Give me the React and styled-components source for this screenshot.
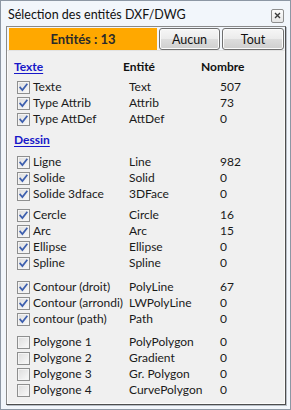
import React from "react";
import styled, { createGlobalStyle } from "styled-components";

const GlobalStyle = createGlobalStyle`
  html, body {
    margin: 0;
    padding: 0;
    background: #ffffff;
  }
  body {
    font-family: Lato, "Open Sans", "Liberation Sans", sans-serif;
    font-size: 12px;
    color: #1a1a1a;
  }
`;

const groups = [
  {
    title: "Texte",
    showColumns: true,
    blocks: [
      [
        { label: "Texte", entity: "Text", count: 507, checked: true },
        { label: "Type Attrib", entity: "Attrib", count: 73, checked: true },
        { label: "Type AttDef", entity: "AttDef", count: 0, checked: true },
      ],
    ],
  },
  {
    title: "Dessin",
    blocks: [
      [
        { label: "Ligne", entity: "Line", count: 982, checked: true },
        { label: "Solide", entity: "Solid", count: 0, checked: true },
        { label: "Solide 3dface", entity: "3DFace", count: 0, checked: true },
      ],
      [
        { label: "Cercle", entity: "Circle", count: 16, checked: true },
        { label: "Arc", entity: "Arc", count: 15, checked: true },
        { label: "Ellipse", entity: "Ellipse", count: 0, checked: true },
        { label: "Spline", entity: "Spline", count: 0, checked: true },
      ],
      [
        { label: "Contour (droit)", entity: "PolyLine", count: 67, checked: true },
        { label: "Contour (arrondi)", entity: "LWPolyLine", count: 0, checked: true },
        { label: "contour (path)", entity: "Path", count: 0, checked: true },
      ],
      [
        { label: "Polygone 1", entity: "PolyPolygon", count: 0 },
        { label: "Polygone 2", entity: "Gradient", count: 0 },
        { label: "Polygone 3", entity: "Gr. Polygon", count: 0 },
        { label: "Polygone 4", entity: "CurvePolygon", count: 0 },
      ],
    ],
  },
];

const blockGaps = [
  [4],
  [6, 5, 8, 7],
];

const App = () => {
  return (
    <>
      <GlobalStyle />
      <Window>
        <TitleBar>
          <Title>Sélection des entités DXF/DWG</Title>
          <CloseButton aria-label="Fermer">
            <svg width="7" height="7" viewBox="0 0 7 7">
              <path
                d="M1 1 L6 6 M6 1 L1 6"
                stroke="#3c3c3c"
                strokeWidth="1.4"
                fill="none"
              />
            </svg>
          </CloseButton>
        </TitleBar>
        <Frame>
          <Toolbar>
            <CountBadge>Entités : 13</CountBadge>
            <Button>Aucun</Button>
            <Button>Tout</Button>
          </Toolbar>
          <Panel>
            {groups.map((group, gi) => (
              <React.Fragment key={group.title}>
                <SectionHeader $first={gi === 0}>
                  <SectionLink>{group.title}</SectionLink>
                  {group.showColumns && (
                    <>
                      <ColumnHead>Entité</ColumnHead>
                      <ColumnHead>Nombre</ColumnHead>
                    </>
                  )}
                </SectionHeader>
                {group.blocks.map((rows, bi) => (
                  <Block key={bi} $gap={blockGaps[gi][bi]}>
                    {rows.map((row) => (
                      <Row key={row.label}>
                        <CheckLabel>
                          <CheckBox $checked={row.checked}>
                            {row.checked && (
                              <svg width="9" height="9" viewBox="0 0 9 9">
                                <path
                                  d="M1.2 4.6 L3.4 7 L7.8 1.4"
                                  stroke="#3d5fae"
                                  strokeWidth="1.8"
                                  fill="none"
                                  strokeLinecap="square"
                                />
                              </svg>
                            )}
                          </CheckBox>
                          {row.label}
                        </CheckLabel>
                        <Cell>{row.entity}</Cell>
                        <Cell>{row.count}</Cell>
                      </Row>
                    ))}
                  </Block>
                ))}
              </React.Fragment>
            ))}
          </Panel>
        </Frame>
      </Window>
    </>
  );
};

export default App;

const Window = styled.div`
  width: 291px;
  height: 410px;
  box-sizing: border-box;
  border: 1px solid #8d97a4;
  background: #f2f6fb;
  display: flex;
  flex-direction: column;
  padding: 0 4px 4px 5px;
`;

const TitleBar = styled.div`
  height: 25px;
  display: flex;
  align-items: center;
  justify-content: space-between;
  padding: 0 2px 0 2px;
`;

const Title = styled.div`
  font-size: 12.5px;
  color: #111;
  padding-top: 2px;
`;

const CloseButton = styled.div`
  width: 11px;
  height: 12px;
  margin-top: 4px;
  border: 1px solid #8e8e8e;
  border-radius: 2px;
  background: linear-gradient(#fdfdfd, #e6e6e6);
  display: flex;
  align-items: center;
  justify-content: center;
`;

const Frame = styled.div`
  flex: 1;
  display: flex;
  flex-direction: column;
  border: 1px solid #8a8a8a;
  border-right-color: #4d4d4d;
  border-bottom-color: #4d4d4d;
  box-shadow: 1px 1px 0 #b8bec6;
  background: #f0f0f0;
`;

const Toolbar = styled.div`
  display: grid;
  grid-template-columns: 148px 61px 62px;
  column-gap: 2px;
  padding: 1px 2px 0 2px;
  height: 23px;
  box-sizing: border-box;
  background: #f2f6fb;
`;

const CountBadge = styled.div`
  background: #ffa800;
  font-weight: 700;
  font-size: 13px;
  color: #2a2a2a;
  display: flex;
  align-items: center;
  justify-content: center;
  height: 22px;
`;

const Button = styled.div`
  box-sizing: border-box;
  height: 22px;
  border: 1px solid #707070;
  border-radius: 3px;
  background: linear-gradient(#f6f6f6 0%, #ebebeb 50%, #dddddd 51%, #cfcfcf 100%);
  box-shadow: inset 0 0 0 1px #fbfbfb;
  display: flex;
  align-items: center;
  justify-content: center;
  font-size: 12.5px;
  color: #111;
`;

const Panel = styled.div`
  flex: 1;
  background: #f0f0f0;
  border: 1px solid #fbfbfb;
  border-top-color: #e2e2e2;
  padding: 8px 0 0 6px;
  display: flex;
  flex-direction: column;
`;

const SectionHeader = styled.div`
  display: grid;
  grid-template-columns: 109px 78px 1fr;
  height: 16px;
  line-height: 16px;
  margin-top: ${({ $first }) => ($first ? "0" : "5px")};
`;

const SectionLink = styled.span`
  color: #1717c8;
  font-weight: 700;
  text-decoration: underline;
  text-underline-offset: 2px;
`;

const ColumnHead = styled.span`
  font-weight: 700;
  color: #111;
`;

const Block = styled.div`
  display: flex;
  flex-direction: column;
  margin-top: ${({ $gap }) => $gap}px;
  padding-left: 3px;
`;

const Row = styled.div`
  display: grid;
  grid-template-columns: 112px 91px 1fr;
  height: 16px;
  line-height: 16px;
  align-items: center;
`;

const CheckLabel = styled.div`
  display: flex;
  align-items: center;
  gap: 3px;
  white-space: nowrap;
`;

const CheckBox = styled.span`
  box-sizing: border-box;
  width: 13px;
  height: 13px;
  border: 1px solid #8e8f8f;
  background: linear-gradient(135deg, #dcdcdc, #fafafa);
  box-shadow: inset 0 0 0 1px #f4f4f4;
  display: flex;
  align-items: center;
  justify-content: center;
  flex: none;
`;

const Cell = styled.span`
  white-space: nowrap;
`;
